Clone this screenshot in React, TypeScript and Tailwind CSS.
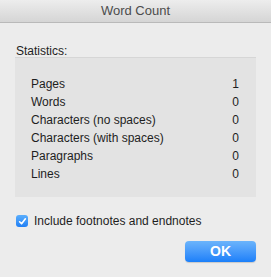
const ROWS: [string, number][] = [
  ["Pages", 1],
  ["Words", 0],
  ["Characters (no spaces)", 0],
  ["Characters (with spaces)", 0],
  ["Paragraphs", 0],
  ["Lines", 0],
];

export default function App() {
  return (
    <div
      className="flex h-[277px] w-[271px] flex-col bg-[#ececec] text-[12px] text-[#1e1e1e]"
      style={{ fontFamily: '"Liberation Sans", Arial, sans-serif' }}
    >
      {/* title bar */}
      <div className="flex h-[23px] items-center justify-center border-b border-[#b9b9b9] bg-linear-to-b from-[#ededed] to-[#d5d5d5] text-[13px] text-[#4c4c4c]">
        Word Count
      </div>

      <div className="flex flex-col px-[15px]">
        <div className="mt-[18px] h-4 pl-px leading-[20px]">Statistics:</div>

        <div className="h-[140px] border-t border-[#d6d6d6] bg-[#e3e3e3] pl-[16px] pr-[17px] pt-[17px]">
          {ROWS.map(([label, value]) => (
            <div key={label} className="flex h-[18px] items-center justify-between">
              <span>{label}</span>
              <span>{value}</span>
            </div>
          ))}
        </div>

        <label className="mt-[16px] flex h-4 items-center gap-[6px] pl-px">
          <span className="flex h-[12px] w-[12px] items-center justify-center rounded-[3px] bg-linear-to-b from-[#5aaefc] to-[#1f7ff5]">
            <svg width="9" height="9" viewBox="0 0 9 9" fill="none">
              <path d="M1.6 4.8 L3.6 6.8 L7.4 1.8" stroke="white" strokeWidth="1.6" strokeLinecap="round" strokeLinejoin="round" />
            </svg>
          </span>
          <span>Include footnotes and endnotes</span>
        </label>

        <div className="mt-[12px] flex justify-end">
          <button className="flex h-[21px] w-[71px] items-center justify-center rounded-[4px] bg-linear-to-b from-[#6bb4fb] to-[#1a7ff9] text-[14px] font-bold text-white shadow-[0_1px_1px_rgba(0,0,0,0.15)]">
            OK
          </button>
        </div>
      </div>
    </div>
  );
}
